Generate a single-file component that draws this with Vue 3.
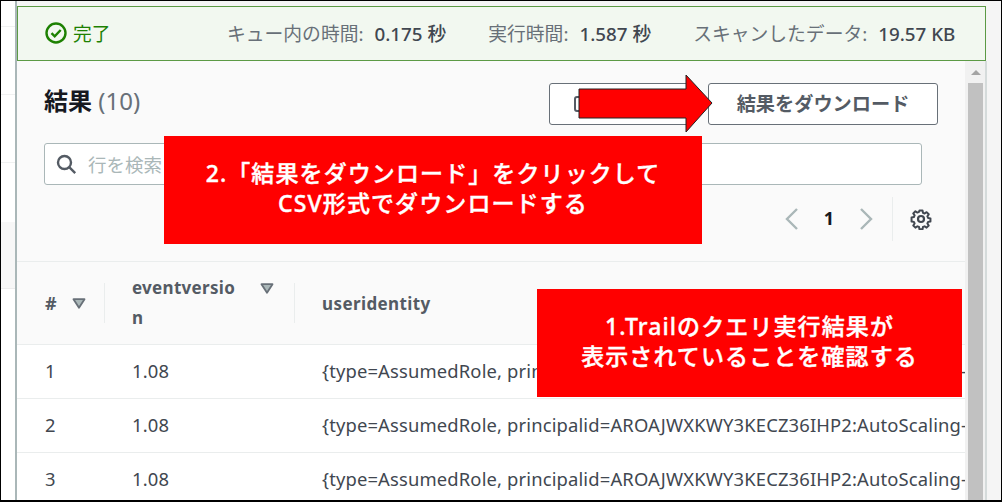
<script setup>
const rows = [
  { n: 1, id: '{type=AssumedRole, principalid=AROAJWXKWY3KECZ36IHP2:AutoScaling-' },
  { n: 2, id: '{type=AssumedRole, principalid=AROAJWXKWY3KECZ36IHP2:AutoScaling-' },
  { n: 3, id: '{type=AssumedRole, principalid=AROAJWXKWY3KECZ36IHP2:AutoScaling-' }
]
</script>

<template>
  <div class="shot">
    <aside class="side">
      <i></i><i></i><i></i>
      <div class="side-block"></div>
    </aside>
    <div class="main">
      <header class="status">
        <div class="done">
          <svg width="22" height="22" viewBox="0 0 22 22" fill="none" stroke="#1d8102" stroke-width="2.4">
            <circle cx="11" cy="11" r="9.500" />
            <path d="M6.500 11.200l3.200 3.200 6-6.400" />
          </svg>
          <span>完了</span>
        </div>
        <div class="stats">
          <span class="stat">キュー内の時間:<b>0.175 秒</b></span>
          <span class="stat">実行時間:<b>1.587 秒</b></span>
          <span class="stat">スキャンしたデータ:<b>19.57 KB</b></span>
        </div>
      </header>
      <div class="content">
        <div class="panel">
          <div class="titlebar">
            <h2>結果 <span>(10)</span></h2>
            <div class="buttons">
              <button class="btn copy" aria-label="コピー">
                <svg width="18" height="16" viewBox="0 0 18 16" fill="none" stroke="#545b64" stroke-width="2"><rect x="1" y="1" width="16" height="14" rx="2" /></svg>
              </button>
              <button class="btn">結果をダウンロード</button>
            </div>
          </div>
          <div class="search">
            <svg width="21" height="21" viewBox="0 0 21 21" fill="none" stroke="#545b64" stroke-width="2.400">
              <circle cx="8.500" cy="8.500" r="6.500" />
              <path d="M13.200 13.200l6 6" />
            </svg>
            <span>行を検索</span>
          </div>
          <div class="pager">
            <svg width="16" height="24" viewBox="0 0 16 24" fill="none" stroke="#aab7b8" stroke-width="2.400"><path d="M13 2L3 12l10 10" /></svg>
            <b>1</b>
            <svg width="16" height="24" viewBox="0 0 16 24" fill="none" stroke="#aab7b8" stroke-width="2.400"><path d="M3 2l10 10-10 10" /></svg>
            <span class="sep"></span>
            <svg class="gear" width="22" height="22" viewBox="0 0 22 22" fill="none" stroke="#414750" stroke-width="2.200" stroke-linejoin="round">
              <circle cx="11" cy="11" r="3" />
              <path d="M9.300 1.500h3.400l.5 2.600 1.800.8 2.200-1.500 2.400 2.400-1.500 2.200.8 1.800 2.600.5v3.400l-2.600.5-.8 1.800 1.500 2.200-2.400 2.400-2.200-1.500-1.800.8-.5 2.600H9.300l-.5-2.600-1.800-.8-2.200 1.500-2.400-2.400 1.500-2.200-.8-1.800-2.600-.5V9.300l2.600-.5.8-1.800-1.500-2.200 2.400-2.400 2.200 1.500 1.800-.8z" transform="translate(1.100 1.100) scale(.9)" />
            </svg>
          </div>
          <div class="table">
            <div class="thead">
              <div class="th c1"><span>#</span>
                <svg class="tri" width="14" height="11" viewBox="0 0 14 11"><path d="M1.500 1.200h11L7 9.800z" fill="#aab7b8" stroke="#687078" stroke-width="1.800" stroke-linejoin="round" /></svg>
              </div>
              <div class="th c2"><span>eventversion</span>
                <svg class="tri top" width="14" height="11" viewBox="0 0 14 11"><path d="M1.500 1.200h11L7 9.800z" fill="#aab7b8" stroke="#687078" stroke-width="1.800" stroke-linejoin="round" /></svg>
              </div>
              <div class="th c3"><span>useridentity</span></div>
            </div>
            <div v-for="r in rows" :key="r.n" class="tr">
              <div class="c1">{{ r.n }}</div>
              <div class="c2">1.08</div>
              <div class="c3">{{ r.id }}</div>
            </div>
          </div>
        </div>
        <div class="scroll">
          <em></em>
          <div class="thumb"></div>
        </div>
      </div>
    </div>
    <div class="note note-a">2.「結果をダウンロード」をクリックして<br />CSV形式でダウンロードする</div>
    <div class="note note-b">1.Trailのクエリ実行結果が<br />表示されていることを確認する</div>
    <svg class="arrow" width="136" height="60" viewBox="0 0 136 60">
      <path d="M1 15H108V1l26 28-26 29V44H1z" fill="#ff0000" stroke="#222" stroke-width="1" />
    </svg>
  </div>
</template>

<style>
html, body { margin: 0; background: #fff; }
</style>

<style scoped>
.shot {
  position: relative;
  width: 1002px;
  height: 502px;
  box-sizing: border-box;
  border: 1px solid #000;
  border-width: 1px 1px 2px 1px;
  display: flex;
  overflow: hidden;
  background: #fff;
  font-family: "Noto Sans", "Noto Sans CJK JP", sans-serif;
  color: #16191f;
}
.side {
  width: 14px;
  flex: none;
  border-right: 2px solid #aab7b8;
  background: #fff;
}
.side i { display: block; height: 1px; background: #f0f1f1; }
.side i:nth-child(1) { margin-top: 25px; }
.side i:nth-child(2) { margin-top: 67px; }
.side i:nth-child(3) { margin-top: 67px; }
.side-block { margin-top: 59px; height: 66px; background: #f7f7f7; border-bottom: 1px solid #ececec; }
.main { flex: 1; display: flex; flex-direction: column; min-width: 0; background: #f5f5f5; }
.status {
  height: 55px;
  margin-top: 5px;
  flex: none;
  box-sizing: border-box;
  border: 1px solid #5c9a45;
  border-width: 1px 1px 1.500px 1px;
  background: #f2f8f0;
  width: 969px;
  display: flex;
  align-items: center;
  padding: 0 0 2px 27px;
  font-size: 18.800px;
}
.done { display: flex; align-items: center; gap: 6px; color: #1d8102; width: 182px; }
.stats { display: flex; gap: 42px; color: #687078; white-space: nowrap; }
.stat b { font-weight: 500; color: #414750; margin-left: 11px; }
.content { flex: 1; display: flex; min-height: 0; }
.panel { width: 948px; flex: none; background: #fafafa; display: flex; flex-direction: column; min-height: 0; overflow: hidden; }
.titlebar {
  display: flex;
  justify-content: space-between;
  padding: 22px 27px 0 27px;
  height: 42px;
  flex: none;
}
h2 { margin: 0; font-size: 24px; line-height: 36px; font-weight: 700; color: #16191f; }
h2 span { font-weight: 400; color: #687078; }
.buttons { display: flex; gap: 18px; }
.btn {
  height: 42px;
  width: 230px;
  box-sizing: border-box;
  background: #fff;
  border: 1.500px solid #687078;
  border-radius: 3px;
  font: 700 19.200px "Noto Sans", "Noto Sans CJK JP", sans-serif;
  color: #545b64;
  padding: 0 0 2px;
}
.btn.copy { width: 141px; display: flex; align-items: center; padding: 0 0 0 24px; }
.search {
  margin: 18px 0 0 27px;
  width: 878px;
  height: 42px;
  box-sizing: border-box;
  flex: none;
  border: 1.500px solid #aab7b8;
  border-radius: 3px;
  background: #fff;
  display: flex;
  align-items: center;
  gap: 11px;
  padding-left: 11px;
  font-size: 18.500px;
  color: #aab7b8;
}
.pager {
  height: 44px;
  margin-top: 12px;
  flex: none;
  display: flex;
  align-items: center;
  padding-left: 767px;
  font-size: 18px;
}
.pager b { width: 58px; text-align: center; color: #16191f; font-weight: 700; padding-bottom: 2px; }
.pager .sep { width: 1px; height: 44px; background: #eaeded; margin: 0 17px 0 18px; }
.table { margin-top: 20px; flex: 1; }
.thead {
  display: flex;
  height: 84px;
  box-sizing: border-box;
  align-items: center;
  background: #fafafa;
  border-top: 1.500px solid #eaeded;
  border-bottom: 1.500px solid #eaeded;
  font-size: 17px;
  font-weight: 700;
  color: #545b64;
}
.tr {
  display: flex;
  align-items: center;
  height: 54px;
  box-sizing: border-box;
  padding-bottom: 2px;
  background: #fff;
  border-bottom: 1.500px solid #eaeded;
  font-size: 18.400px;
  letter-spacing: .15px;
  color: #414750;
  white-space: nowrap;
  overflow: hidden;
}
.c1 { width: 88px; padding-left: 28px; box-sizing: border-box; flex: none; }
.c2 { width: 190px; padding-left: 27px; box-sizing: border-box; flex: none; }
.c3 { padding-left: 27px; box-sizing: border-box; flex: none; }
.th { display: flex; align-self: center; }
.th.c1, .th.c2 { border-right: 1.500px solid #eaeded; height: 40px; align-items: center; }
.th.c2 span { width: 108px; word-break: break-all; line-height: 30px; letter-spacing: .3px; }
.th.c1 span { width: 27px; font-size: 18px; }
.th.c3 span { letter-spacing: .4px; }
.tri { display: block; flex: none; }
.tri.top { align-self: flex-start; margin-left: 20px; }
.scroll {
  flex: none;
  box-sizing: border-box;
  padding: 0 2px 0 3px;
  background: #f1f1f1;
  border-right: 2px solid #d5dbdb;
  width: 22px;
}
.scroll em {
  display: block;
  width: 0;
  height: 0;
  margin: 9px auto 8px;
  border-left: 5px solid transparent;
  border-right: 5px solid transparent;
  border-bottom: 5px solid #a3a3a3;
}
.scroll .thumb { height: 440px; background: #c1c1c1; }
.note {
  position: absolute;
  box-sizing: border-box;
  padding-bottom: 4px;
  background: #ff0000;
  color: #fff;
  font-weight: 500;
  font-size: 23px;
  line-height: 30px;
  -webkit-text-stroke: .4px #fff;
  text-align: center;
  display: flex;
  align-items: center;
  justify-content: center;
  letter-spacing: 1.100px;
}
.note-a { left: 163px; top: 135px; width: 538px; height: 108px; }
.note-b { left: 536px; top: 288px; width: 425px; height: 108px; }
.arrow { position: absolute; left: 577px; top: 73px; }
</style>
